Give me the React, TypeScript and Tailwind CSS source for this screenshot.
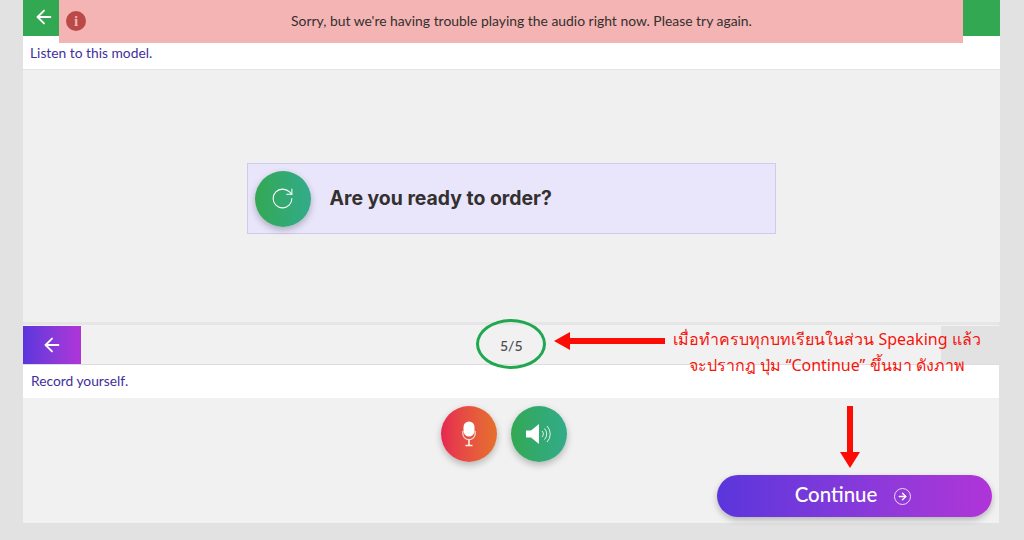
import { ArrowLeft, ArrowRight, RotateCw } from "lucide-react";

function Mic() {
  return (
    <svg width="14" height="26" viewBox="0 0 14 26" fill="none">
      <rect x="1.5" y="0.5" width="11" height="15" rx="5.5" fill="#fff" />
      <path d="M0.8 10v2.5a6.2 6.2 0 0 0 12.4 0V10" stroke="#fff" strokeWidth="1.2" opacity="0.8" />
      <path d="M7 19v5M3.5 24.5h7" stroke="#fff" strokeWidth="1.6" opacity="0.9" />
    </svg>
  );
}

function Speaker() {
  return (
    <svg width="26" height="22" viewBox="0 0 26 22" fill="none">
      <path d="M0 7.5h5L13 1v20l-8-6.500H0z" fill="#fff" />
      <path d="M16 8a4 4 0 0 1 0 6M18.500 5.500a8 8 0 0 1 0 11M21 3a11.500 11.500 0 0 1 0 16" stroke="#fff" strokeWidth="1" opacity="0.85" />
    </svg>
  );
}

export default function App() {
  return (
    <div className="relative h-[540px] w-[1024px] overflow-hidden bg-[#e3e2e2] font-['Lato',sans-serif] pl-[23px] pr-[24px]">
      <div className="flex h-[523px] flex-col bg-[#e3e2e2]">
        {/* top lesson */}
        <div className="flex h-[36px] items-start bg-[#33a852] pl-[10px] pt-[6px] text-white">
          <ArrowLeft size={22} strokeWidth={2} />
        </div>
        <div className="flex h-[34px] items-center border-b border-[#e4e4e4] bg-white pl-[7px] pt-[1px] text-[13.8px] text-[#3f2f9c]">
          Listen to this model.
        </div>

        <div className="flex h-[252px] items-start justify-center bg-[#f0f0f0] pt-[93px]">
          <div className="ml-[-1px] flex h-[71px] w-[529px] items-center gap-[19px] border border-[#cfcaf0] bg-[#e9e5fb] pl-[7px]">
            <div className="flex h-[56px] w-[56px] items-center justify-center rounded-full bg-gradient-to-r from-[#33a852] to-[#33ab8a] text-white shadow-[0_3px_7px_rgba(0,0,0,0.25)]">
              <RotateCw size={25} strokeWidth={1} />
            </div>
            <span className="pt-[1px] font-['Inter',sans-serif] text-[19.4px] font-bold text-[#33302f]">Are you ready to order?</span>
          </div>
        </div>

        {/* recording section */}
        <div className="mr-[1px] flex flex-1 flex-col bg-[#f1f1f1]">
          <div className="flex h-[43px] items-end border-t-[3px] border-[#e6e6e6]">
            <div className="flex h-[39px] w-full items-center border-b border-[#dddddd]">
              <div className="flex h-[38px] w-[58px] items-center justify-center bg-gradient-to-r from-[#5a35dc] to-[#b034d8] text-white">
                <ArrowLeft size={22} strokeWidth={2} />
              </div>
              <span className="ml-[419px] text-[14px] font-medium text-[#4a4a4a]">5/5</span>
              <div className="ml-auto h-full w-[58px] bg-[#e2e2e2]" />
            </div>
          </div>
          <div className="flex h-[33px] items-center bg-white pl-[8px] text-[13.8px] text-[#3f2f9c]">
            Record yourself.
          </div>

          <div className="flex flex-1 flex-col">
            <div className="flex justify-center gap-[14px] pr-[15px] pt-[8px]">
              <div className="flex h-[56px] w-[56px] items-center justify-center rounded-full bg-gradient-to-r from-[#e6264f] to-[#e5702a] shadow-[0_3px_7px_rgba(0,0,0,0.25)]">
                <Mic />
              </div>
              <div className="flex h-[56px] w-[56px] items-center justify-center rounded-full bg-gradient-to-r from-[#33a852] to-[#33ab8a] shadow-[0_3px_7px_rgba(0,0,0,0.25)]">
                <Speaker />
              </div>
            </div>
            <div className="flex justify-end pr-[7px] pt-[13px]">
              <button className="flex h-[42px] w-[275px] items-center justify-center gap-[17px] rounded-full bg-gradient-to-r from-[#5a35dc] to-[#b034d8] pr-[3px] text-[20.4px] font-medium text-white shadow-[0_3px_6px_rgba(0,0,0,0.25)]">
                <span className="pb-[3px]">Continue</span>
                <span className="flex h-[17px] w-[17px] items-center justify-center rounded-full border border-white/80">
                  <ArrowRight size={11} strokeWidth={3} />
                </span>
              </button>
            </div>
          </div>
        </div>
      </div>

      {/* error alert, over the header */}
      <div className="absolute left-[59px] top-0 flex h-[43px] w-[904px] items-center justify-center bg-[#f4b4b3] pl-[21px] text-[13.9px] text-[#33302f]">
        <span className="absolute left-[7px] top-[11px] flex h-[20px] w-[20px] items-center justify-center rounded-full bg-[#b94a48] font-['Liberation_Serif',serif] text-[15px] font-bold text-[#f4b4b3]">i</span>
        Sorry, but we're having trouble playing the audio right now. Please try again.
      </div>

      {/* annotations */}
      <div className="absolute left-[476px] top-[319px] h-[50px] w-[70px] rounded-[50%] border-[3px] border-[#1fa84f]" />
      <svg className="absolute left-[554px] top-[331px]" width="112" height="20" viewBox="0 0 112 20">
        <path d="M0 10 16 1v6h95v6H16v6z" fill="#fb0d05" />
      </svg>
      <svg className="absolute left-[840px] top-[405px]" width="20" height="64" viewBox="0 0 20 64">
        <path d="M7 1h6v46h7L10 63 0 47h7z" fill="#fb0d05" />
      </svg>
      <div className="absolute left-[660px] top-[326px] w-[334px] text-center font-['Noto_Sans',sans-serif] text-[16px] leading-[26px] text-[#f5140c]">
        <div>เมื่อทำครบทุกบทเรียนในส่วน Speaking แล้ว</div>
        <div>จะปรากฎ ปุ่ม “Continue” ขึ้นมา ดังภาพ</div>
      </div>
    </div>
  );
}
